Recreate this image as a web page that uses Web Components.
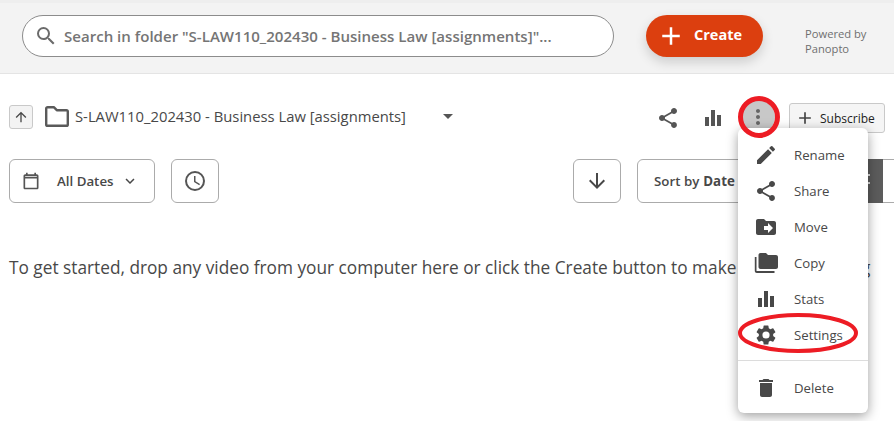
<!DOCTYPE html>
<html>
<head>
<meta charset="utf-8">
<style>
  html, body { margin: 0; height: 100%; overflow: hidden; background: #fff; }
  body { font-family: "Open Sans", sans-serif; color: #484848; position: relative; }
</style>
</head>
<body>
<top-bar></top-bar>
<folder-row></folder-row>
<filter-row></filter-row>
<p-empty>To get started, drop any video from your computer here or click the Create button to make a new recording</p-empty>
<more-menu></more-menu>
<script>
const ICONS = {
  search: '<path d="M15.5 14h-.79l-.28-.27A6.47 6.47 0 0 0 16 9.5 6.5 6.5 0 1 0 9.5 16c1.61 0 3.09-.59 4.23-1.57l.27.28v.79l5 4.99L20.49 19l-4.99-5zm-6 0C7.01 14 5 11.99 5 9.5S7.01 5 9.5 5 14 7.01 14 9.5 11.99 14 9.5 14z"/>',
  plus: '<path d="M19 13h-6v6h-2v-6H5v-2h6V5h2v6h6v2z"/>',
  up: '<path d="M4 12l1.41 1.41L11 7.83V20h2V7.83l5.58 5.59L20 12l-8-8-8 8z"/>',
  down: '<path d="M20 12l-1.41-1.41L13 16.17V4h-2v12.17l-5.58-5.59L4 12l8 8 8-8z"/>',
  share: '<path d="M18 16.08c-.76 0-1.44.3-1.96.77L8.91 12.7c.05-.23.09-.46.09-.7s-.04-.47-.09-.7l7.05-4.11c.54.5 1.25.81 2.04.81 1.66 0 3-1.34 3-3s-1.34-3-3-3-3 1.34-3 3c0 .24.04.47.09.7L8.04 9.81C7.5 9.31 6.79 9 6 9c-1.66 0-3 1.34-3 3s1.34 3 3 3c.79 0 1.5-.31 2.04-.81l7.12 4.16c-.05.21-.08.43-.08.65 0 1.61 1.31 2.92 2.92 2.92s2.92-1.31 2.92-2.92-1.31-2.92-2.92-2.92z"/>',
  stats: '<path d="M4 11h4v9H4zM10 4h4v16h-4zM16 9h4v11h-4z"/>',
  dots: '<path d="M12 8c1.1 0 2-.9 2-2s-.9-2-2-2-2 .9-2 2 .9 2 2 2zm0 2c-1.1 0-2 .9-2 2s.9 2 2 2 2-.9 2-2-.9-2-2-2zm0 6c-1.1 0-2 .9-2 2s.9 2 2 2 2-.9 2-2-.9-2-2-2z"/>',
  calendar: '<path d="M19 4h-1V2h-2v2H8V2H6v2H5c-1.1 0-2 .9-2 2v14c0 1.1.9 2 2 2h14c1.1 0 2-.9 2-2V6c0-1.1-.9-2-2-2zm0 16H5V9h14v11zM5 7V6h14v1H5z"/>',
  chevron: '<path d="M7.41 8.59L12 13.17l4.59-4.58L18 10l-6 6-6-6z"/>',
  clock: '<path d="M12 2a10 10 0 1 0 0 20 10 10 0 0 0 0-20zm0 18a8 8 0 1 1 0-16 8 8 0 0 1 0 16zm.5-13H11v6l5.25 3.15.75-1.23-4.5-2.67z"/>',
  pencil: '<path d="M3 17.25V21h3.75L17.81 9.94l-3.75-3.75L3 17.25zM20.71 7.04a1 1 0 0 0 0-1.41l-2.34-2.34a1 1 0 0 0-1.41 0l-1.83 1.83 3.75 3.75 1.83-1.83z"/>',
  move: '<path d="M20 6h-8l-2-2H4c-1.1 0-2 .9-2 2v12c0 1.1.9 2 2 2h16c1.1 0 2-.9 2-2V8c0-1.1-.9-2-2-2zm-6 12v-3h-4v-4h4V8l5 5-5 5z"/>',
  copy: '<path d="M2.5 6H.8v14c0 1.1.9 2 2 2h17.7v-2H2.5V6zM22 4h-8l-2-2H6.500c-1.100 0-2 .9-2 2v12c0 1.100.9 2 2 2H22c1.100 0 2-.9 2-2V6c0-1.100-.9-2-2-2z"/>',
  gear: '<path d="M19.14 12.94c.04-.3.06-.61.06-.94s-.02-.64-.07-.94l2.03-1.58a.49.49 0 0 0 .12-.61l-1.92-3.32a.49.49 0 0 0-.59-.22l-2.39.96a7 7 0 0 0-1.62-.94l-.36-2.54a.48.48 0 0 0-.48-.41h-3.84a.48.48 0 0 0-.47.41l-.36 2.54c-.59.24-1.13.57-1.62.94l-2.39-.96a.48.48 0 0 0-.59.22L2.74 8.87a.48.48 0 0 0 .12.61l2.03 1.58c-.05.3-.09.63-.09.94s.02.64.07.94l-2.03 1.58a.49.49 0 0 0-.12.61l1.92 3.32c.12.22.37.29.59.22l2.39-.96c.5.38 1.03.7 1.62.94l.36 2.54c.05.24.24.41.48.41h3.84c.24 0 .44-.17.47-.41l.36-2.54c.59-.24 1.13-.56 1.62-.94l2.39.96c.22.08.47 0 .59-.22l1.92-3.32a.49.49 0 0 0-.12-.61l-2.01-1.58zM12 15.6A3.6 3.6 0 1 1 12 8.400a3.6 3.6 0 0 1 0 7.200z"/>',
  trash: '<path d="M6 19c0 1.100.9 2 2 2h8c1.100 0 2-.9 2-2V7H6v12zM19 4h-3.500l-1-1h-5l-1 1H5v2h14V4z"/>'
}

function icon (name, size, color) {
  return `<svg xmlns="http://www.w3.org/2000/svg" viewBox="0 0 24 24" width="${size}" height="${size}" fill="${color || 'currentColor'}" style="display:block;flex:none">${ICONS[name]}</svg>`
}

class TopBar extends HTMLElement {
  constructor () {
    super()
    this.shadow = this.attachShadow({ mode: 'open' })
  }

  connectedCallback () {
    this.shadow.innerHTML = `
      <style>
        :host{
          display: flex;
          align-items: flex-start;
          box-sizing: border-box;
          height: 74px;
          padding: 15px 0 0 22px;
          background: #f3f3f3;
          border-top: 3px solid #eeeeee;
          border-bottom: 1px solid #e4e4e4;
        }
        .search{
          box-sizing: border-box;
          width: 592px;
          height: 42px;
          margin-top: -3px;
          padding: 0 10px 0 11px;
          display: flex;
          align-items: center;
          gap: 6px;
          background: #fff;
          border: 1px solid #8c8c8c;
          border-radius: 21px;
          color: #757575;
          font-size: 15.06px;
          font-weight: 600;
          white-space: nowrap;
        }
        .create{
          box-sizing: border-box;
          width: 117px;
          height: 42px;
          margin: -3px 0 0 32px;
          padding-left: 10px;
          display: flex;
          align-items: center;
          gap: 8px;
          background: #dc3f0f;
          border-radius: 21px;
          color: #fff;
          font-size: 14.5px;
          font-weight: 700;
          box-shadow: 0 5px 12px rgba(0,0,0,.16);
        }
        .create span{ margin-top: -3px; }
        .powered{
          margin: 8px 0 0 42px;
          font-size: 11.2px;
          line-height: 15px;
          color: #6f6f6f;
        }
      </style>
      <div class="search">${icon('search', 24, '#6b6b6b')}<span>Search in folder "S-LAW110_202430 - Business Law [assignments]"...</span></div>
      <div class="create">${icon('plus', 30)}<span>Create</span></div>
      <div class="powered">Powered by<br>Panopto</div>
    `
  }
}

class FolderRow extends HTMLElement {
  constructor () {
    super()
    this.shadow = this.attachShadow({ mode: 'open' })
  }

  connectedCallback () {
    this.shadow.innerHTML = `
      <style>
        :host{
          display: flex;
          align-items: center;
          height: 30px;
          margin-top: 29px;
          padding-left: 9px;
          color: #484848;
        }
        .up{
          box-sizing: border-box;
          width: 24px;
          height: 24px;
          display: flex;
          align-items: center;
          justify-content: center;
          margin-top: -3px;
          background: #f3f3f3;
          border: 1px solid #c9c9c9;
          border-radius: 3px;
        }
        .folder{ display: block; flex: none; margin: -3px 0 0 12px; }
        .name{
          margin: -5px 0 0 6px;
          width: 368px;
          flex: none;
          font-size: 14.8px;
          white-space: nowrap;
        }
        .caret{
          width: 0;
          height: 0;
          margin-top: -3px;
          border: 5.5px solid transparent;
          border-top: 5.5px solid #555;
          border-bottom: 0;
        }
        .tools{
          display: flex;
          align-items: center;
          gap: 21px;
          margin-left: 203px;
        }
        .dots{
          width: 34px;
          height: 34px;
          margin: -2px 0 0 -5px;
          display: flex;
          align-items: center;
          justify-content: center;
          background: #c8c8c8;
          border-radius: 50%;
        }
        .subscribe{
          box-sizing: border-box;
          width: 96px;
          height: 30px;
          margin-left: 14px;
          padding-left: 5px;
          display: flex;
          align-items: center;
          gap: 5px;
          background: #f5f5f5;
          border: 1px solid #c9c9c9;
          border-radius: 3px;
          color: #222;
          font-size: 12px;
        }
      </style>
      <div class="up">${icon('up', 16)}</div>
      <svg class="folder" xmlns="http://www.w3.org/2000/svg" width="24" height="21" viewBox="0 0 24 21" fill="none" stroke="#5a5a5a" stroke-width="2.4" stroke-linejoin="round">
        <path d="M2.6 1.200h6.200l3 3h9.600a1.400 1.400 0 0 1 1.400 1.400v12.800a1.400 1.400 0 0 1-1.400 1.400H2.600a1.400 1.400 0 0 1-1.400-1.400V2.600a1.400 1.400 0 0 1 1.400-1.400z"/>
      </svg>
      <div class="name">S-LAW110_202430 - Business Law [assignments]</div>
      <div class="caret"></div>
      <div class="tools">
        ${icon('share', 24, '#555')}
        ${icon('stats', 24, '#555')}
        <div class="dots">${icon('dots', 24, '#666')}</div>
      </div>
      <div class="subscribe">${icon('plus', 20, '#444')}<span>Subscribe</span></div>
    `
  }
}

class FilterRow extends HTMLElement {
  constructor () {
    super()
    this.shadow = this.attachShadow({ mode: 'open' })
  }

  connectedCallback () {
    this.shadow.innerHTML = `
      <style>
        :host{
          display: flex;
          align-items: center;
          height: 44px;
          margin-top: 26px;
          padding-left: 9px;
          white-space: nowrap;
        }
        .btn{
          box-sizing: border-box;
          height: 44px;
          display: flex;
          align-items: center;
          flex: none;
          background: #fff;
          border: 1px solid #ababab;
          border-radius: 6px;
          color: #484848;
          font-size: 13.3px;
          font-weight: 600;
        }
        .dates{ width: 146px; padding-left: 11px; }
        .dates span{ margin: 0 7px 0 16px; }
        .clock{ width: 48px; margin-left: 16px; justify-content: center; }
        .arrow{ width: 48px; margin-left: 354px; justify-content: center; }
        .sort{ width: 270px; margin-left: 16px; padding-left: 16px; }
        .sort b{ font-weight: 700; margin-left: 4px; }
        .grey{
          position: absolute;
          left: 868px;
          top: 159px;
          width: 15px;
          height: 44px;
          background: #5c5c5c;
        }
        .grey i{
          position: absolute;
          left: 0;
          width: 2px;
          height: 2px;
          background: #ddd;
        }
      </style>
      <div class="btn dates">${icon('calendar', 20, '#555')}<span>All Dates</span>${icon('chevron', 18, '#484848')}</div>
      <div class="btn clock">${icon('clock', 24, '#555')}</div>
      <div class="btn arrow">${icon('down', 24)}</div>
      <div class="btn sort">Sort by <b>Date</b></div>
      <div class="grey"><i style="top:15px"></i><i style="top:23px"></i></div>
    `
  }
}

class PEmpty extends HTMLElement {
  constructor () {
    super()
    this.attachShadow({ mode: 'open' }).innerHTML = `
      <style>
        :host{
          display: block;
          margin-top: 53px;
          padding-left: 9px;
          font-size: 17.25px;
          line-height: 24px;
          color: #484848;
          white-space: nowrap;
          overflow: hidden;
        }
      </style>
      <slot></slot>
    `
  }
}

class MoreMenu extends HTMLElement {
  constructor () {
    super()
    this.shadow = this.attachShadow({ mode: 'open' })
  }

  item (name, label, size) {
    return `<div class="item"><span class="ic">${icon(name, size || 24, '#484848')}</span><span>${label}</span></div>`
  }

  connectedCallback () {
    this.shadow.innerHTML = `
      <style>
        :host{
          position: absolute;
          inset: 0;
          display: block;
          pointer-events: none;
        }
        .menu{
          position: absolute;
          left: 738px;
          top: 128px;
          width: 130px;
          height: 285px;
          box-sizing: border-box;
          padding-top: 9px;
          background: #fff;
          border-radius: 6px;
          box-shadow: 0 3px 12px rgba(0,0,0,.38);
          font-size: 13.2px;
          color: #484848;
        }
        .item{
          display: flex;
          align-items: center;
          height: 36px;
        }
        .ic{
          width: 56px;
          flex: none;
          display: flex;
          justify-content: center;
        }
        hr{
          margin: 7px 0 9px;
          border: 0;
          border-top: 1px solid #dcdcdc;
        }
        svg.ring{
          position: absolute;
          left: 0;
          top: 0;
        }
      </style>
      <div class="menu">
        ${this.item('pencil', 'Rename')}
        ${this.item('share', 'Share')}
        ${this.item('move', 'Move')}
        ${this.item('copy', 'Copy')}
        ${this.item('stats', 'Stats')}
        ${this.item('gear', 'Settings')}
        <hr>
        ${this.item('trash', 'Delete')}
      </div>
      <svg class="ring" xmlns="http://www.w3.org/2000/svg" width="894" height="421" fill="none" stroke="#ed1c24">
        <circle cx="759" cy="117" r="18.500" stroke-width="5"/>
        <ellipse cx="798" cy="333" rx="58" ry="18" stroke-width="4"/>
      </svg>
    `
  }
}

customElements.define('top-bar', TopBar)
customElements.define('folder-row', FolderRow)
customElements.define('filter-row', FilterRow)
customElements.define('p-empty', PEmpty)
customElements.define('more-menu', MoreMenu)
</script>
</body>
</html>
